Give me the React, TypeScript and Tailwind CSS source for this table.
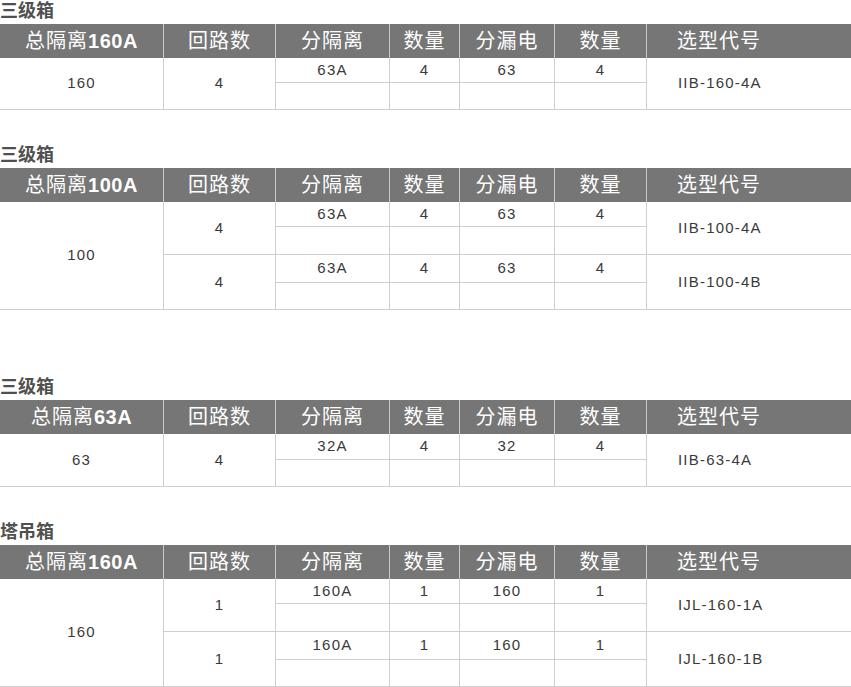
const cols = ['w-[164px]', 'w-[112px]', 'w-[114px]', 'w-[70px]', 'w-[95px]', 'w-[92px]']

type Group = {
  circuits: string
  iso: string
  q1: string
  rcd: string
  q2: string
  code: string
  h: [string, string]
  last?: boolean
}

type Box = {
  title: string
  amps: string
  value: string
  top: string
  groups: Group[]
}

const boxes: Box[] = [
  {
    title: '三级箱',
    amps: '160A',
    value: '160',
    top: 'mt-0',
    groups: [{ circuits: '4', iso: '63A', q1: '4', rcd: '63', q2: '4', code: 'IIB-160-4A', h: ['h-[25px]', 'h-[26px]'] }],
  },
  {
    title: '三级箱',
    amps: '100A',
    value: '100',
    top: 'mt-[34px]',
    groups: [
      { circuits: '4', iso: '63A', q1: '4', rcd: '63', q2: '4', code: 'IIB-100-4A', h: ['h-[25px]', 'h-[27px]'] },
      { circuits: '4', iso: '63A', q1: '4', rcd: '63', q2: '4', code: 'IIB-100-4B', h: ['h-[28px]', 'h-[26px]'] },
    ],
  },
  {
    title: '三级箱',
    amps: '63A',
    value: '63',
    top: 'mt-[66px]',
    groups: [{ circuits: '4', iso: '32A', q1: '4', rcd: '32', q2: '4', code: 'IIB-63-4A', h: ['h-[26px]', 'h-[26px]'] }],
  },
  {
    title: '塔吊箱',
    amps: '160A',
    value: '160',
    top: 'mt-[34px]',
    groups: [
      { circuits: '1', iso: '160A', q1: '1', rcd: '160', q2: '1', code: 'IJL-160-1A', h: ['h-[25px]', 'h-[27px]'] },
      { circuits: '1', iso: '160A', q1: '1', rcd: '160', q2: '1', code: 'IJL-160-1B', h: ['h-[28px]', 'h-[26px]'] },
    ],
  },
]

const sans = "font-['Liberation_Sans','Noto_Sans_CJK_SC',sans-serif]"

function Header({ amps }: { amps: string }) {
  const labels = ['回路数', '分隔离', '数量', '分漏电', '数量']
  return (
    <div className={`flex h-[34px] bg-[#767676] text-[20px] tracking-[1px] text-white ${sans}`}>
      <div className={`${cols[0]} flex items-center justify-center border-r border-[#c9c9c9]`}>
        总隔离<span className="font-bold tracking-[0.5px]">{amps}</span>
      </div>
      {labels.map((l, i) => (
        <div key={i} className={`${cols[i + 1]} flex items-center justify-center border-r border-[#c9c9c9]`}>
          {l}
        </div>
      ))}
      <div className="flex flex-1 items-center pl-[30px]">选型代号</div>
    </div>
  )
}

function GroupRow({ g }: { g: Group }) {
  const cell = 'flex items-center justify-center border-r border-[#cfcfcf]'
  return (
    <div className={`flex ${g.last ? '' : 'border-b border-[#cfcfcf]'}`}>
      <div className={`${cols[1]} ${cell}`}>{g.circuits}</div>
      <div className="flex flex-col">
        <div className={`flex ${g.h[0]} border-b border-[#cfcfcf]`}>
          <div className={`${cols[2]} ${cell}`}>{g.iso}</div>
          <div className={`${cols[3]} ${cell}`}>{g.q1}</div>
          <div className={`${cols[4]} ${cell}`}>{g.rcd}</div>
          <div className={`${cols[5]} ${cell}`}>{g.q2}</div>
        </div>
        <div className={`flex ${g.h[1]}`}>
          <div className={`${cols[2]} border-r border-[#cfcfcf]`} />
          <div className={`${cols[3]} border-r border-[#cfcfcf]`} />
          <div className={`${cols[4]} border-r border-[#cfcfcf]`} />
          <div className={`${cols[5]} border-r border-[#cfcfcf]`} />
        </div>
      </div>
      <div className="flex flex-1 items-center pl-[31px]">{g.code}</div>
    </div>
  )
}

function SpecTable({ box }: { box: Box }) {
  return (
    <section className={box.top}>
      <h2 className={`h-[24px] text-[18px] leading-[22px] font-bold text-[#505050] ${sans}`}>{box.title}</h2>
      <Header amps={box.amps} />
      <div className={`flex border-b border-[#cfcfcf] text-[15px] tracking-[1.2px] text-[#3a3a3a] ${sans}`}>
        <div className={`${cols[0]} flex items-center justify-center border-r border-[#cfcfcf]`}>{box.value}</div>
        <div className="flex flex-1 flex-col">
          {box.groups.map((g, i) => (
            <GroupRow key={i} g={{ ...g, last: i === box.groups.length - 1 }} />
          ))}
        </div>
      </div>
    </section>
  )
}

export default function App() {
  return (
    <div className="w-[851px] overflow-hidden bg-white">
      {boxes.map((b, i) => (
        <SpecTable key={i} box={b} />
      ))}
    </div>
  )
}
